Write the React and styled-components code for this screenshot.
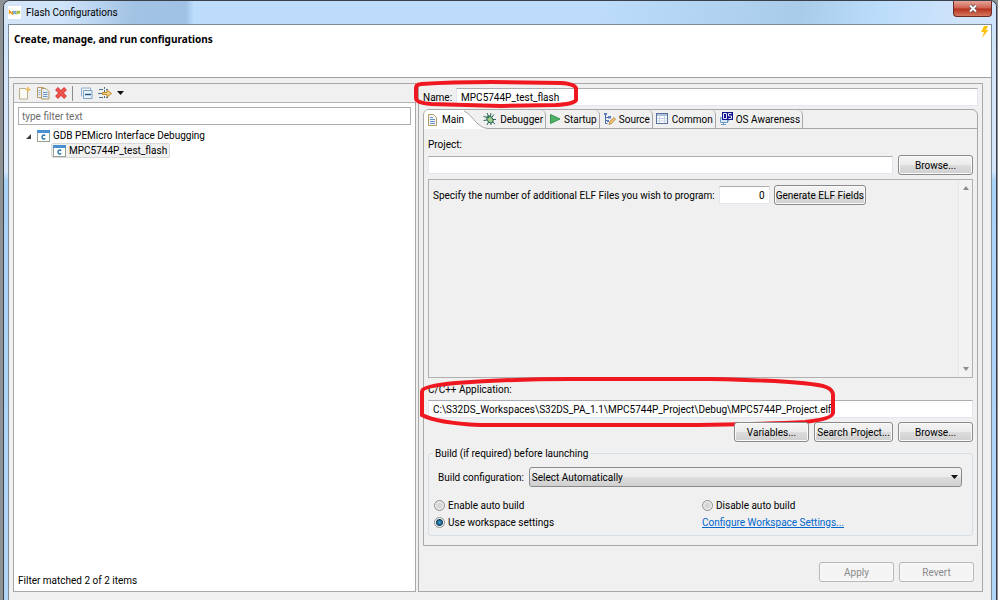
import React from 'react';
import styled, { createGlobalStyle } from 'styled-components';

const GlobalStyle = createGlobalStyle`
  *, *::before, *::after { box-sizing: border-box; }
  body {
    margin: 0;
    background: #8f9295;
    font-family: Roboto, 'Open Sans', sans-serif;
    font-size: 10px;
    line-height: 15px;
    color: #000;
  }
  button, input, select { font: inherit; color: inherit; margin: 0; }
`;

const Window = styled.main`
  display: flex;
  flex-direction: column;
  min-height: 100vh;
  margin: 0 1px 0 3px;
  padding: 0 4px;
  border: 1px solid #3a4148;
  border-bottom: 0;
  border-radius: 7px 7px 0 0;
  background: linear-gradient(#cfe3fa 0, #d4e6fa 170px, #a9d2f7 180px, #b2d6f8 100%);
`;

const TitleBar = styled.header`
  display: flex;
  align-items: center;
  gap: 5px;
  height: 23px;
  margin: 0 -4px;
  padding: 0 4px;
  border-radius: 6px 6px 0 0;
  background:
    linear-gradient(90deg, rgba(120, 160, 200, 0) 60px, rgba(120, 160, 200, 0.45) 130px, rgba(120, 160, 200, 0.45) 182px, rgba(120, 160, 200, 0) 190px),
    linear-gradient(100deg, #d6e6f8 0, #bddcfc 20%, #bddcfc 60%, #a9cbea 80%, #bbdcfb 88%, #cfe3fa 96%);
`;

const Title = styled.h1`
  flex: 1;
  margin: 0;
  font-size: 10px;
  font-weight: 400;
`;

const CloseButton = styled.button`
  display: flex;
  align-items: center;
  justify-content: center;
  align-self: flex-start;
  width: 39px;
  height: 16px;
  padding: 0;
  border: 1px solid #6b2a22;
  border-top: 0;
  border-radius: 0 0 4px 4px;
  background: linear-gradient(#e5a499, #d0604f 48%, #b5301c 52%, #d5775f);
`;

const Client = styled.div`
  flex: 1;
  display: flex;
  flex-direction: column;
  border: 1px solid #7d8b99;
  border-bottom: 0;
  background: #f0f0f0;
`;

const Banner = styled.div`
  display: flex;
  justify-content: space-between;
  height: 53px;
  padding: 0 2px 0 5px;
  border-bottom: 1px solid #a0a0a0;
  background: #fff;
`;

const BannerTitle = styled.h2`
  margin: 7px 0 0;
  font-family: 'Noto Sans', sans-serif;
  font-size: 10px;
  font-weight: 700;
`;

const Columns = styled.div`
  flex: 1;
  display: grid;
  grid-template-columns: minmax(0, 403fr) minmax(0, 565fr);
  gap: 2px;
  padding: 5px 8px 8px 4px;
`;

const Panel = styled.section`
  display: flex;
  flex-direction: column;
  border: 1px solid #a8a8a8;
  background: ${(p) => (p.$white ? '#fff' : '#f0f0f0')};
`;

const Toolbar = styled.div`
  display: flex;
  align-items: center;
  gap: 4px;
  height: 19px;
  padding: 0 4px;
  border-bottom: 1px solid #b4b4b4;
  background: #f0f0f0;
`;

const ToolButton = styled.button`
  display: flex;
  padding: 0;
  border: 0;
  background: none;
`;

const Separator = styled.span`
  width: 1px;
  height: 15px;
  margin-right: 3px;
  background: #8c8c8c;
`;

const TextInput = styled.input`
  flex: 1;
  width: ${(p) => p.$width || 'auto'};
  min-width: 0;
  height: 18px;
  padding: 0 4px;
  border: 1px solid #e2e6ee;
  border-top-color: #abadb3;
  background: #fff;
  text-align: ${(p) => p.$align || 'left'};
`;

const FilterInput = styled(TextInput)`
  flex: none;
  margin: 4px 4px 3px;
  padding: 0 3px;
  border-color: #abadb3;
  &::placeholder { color: #6d6d6d; opacity: 1; }
`;

const Tree = styled.ul`
  flex: 1;
  margin: 0;
  padding: 0 4px;
  list-style: none;
`;

const Branch = styled.ul`
  margin: 0;
  padding: 0 0 0 33px;
  list-style: none;
`;

const TreeRow = styled.div`
  display: flex;
  align-items: center;
  gap: 3px;
  width: fit-content;
  height: 15px;
  padding: 0 2px 0 1px;
  border: 1px solid ${(p) => (p.$selected ? '#d9d9d9' : 'transparent')};
  border-radius: 2px;
  background: ${(p) => (p.$selected ? '#f0f0f0' : 'none')};
`;

const Status = styled.p`
  margin: 0;
  padding: 0 4px 3px;
`;

const Row = styled.div`
  position: relative;
  display: flex;
  align-items: center;
  gap: 5px;
`;

const NameRow = styled(Row)`
  gap: 4px;
  padding: 4px 4px 3px;
`;

const TabFolder = styled.div`
  flex: 1;
  display: flex;
  flex-direction: column;
  margin: 0 4px;
  border: 1px solid #a8a8a8;
  border-radius: 6px 6px 0 0;
`;

const TabList = styled.div`
  display: flex;
  height: 19px;
  border-bottom: 1px solid #a8a8a8;
`;

const Tab = styled.button`
  display: flex;
  align-items: center;
  gap: 3px;
  height: 18px;
  padding: 0 2px 0 3px;
  border: 0;
  border-right: 1px solid #a8a8a8;
  border-radius: 0 5px 0 0;
  background: none;
  white-space: nowrap;
`;

const ActiveTab = styled(Tab)`
  position: relative;
  z-index: 1;
  height: 19px;
  padding: 0 0 0 3px;
  border: 0;
  border-radius: 5px 0 0 0;
  background: #fff;
`;

/* the slanted edge runs under the first inactive tab */
const TabCurve = styled.svg`
  flex: none;
  margin: 0 -8px 0 -4px;
`;

const TabPage = styled.div`
  flex: 1;
  display: flex;
  flex-direction: column;
  padding: 8px 4px 9px;
`;

const FieldLabel = styled.label`
  height: 18px;
`;

const PushButton = styled.button`
  width: ${(p) => p.$width || 'auto'};
  height: 20px;
  padding: 0 1px;
  border: 1px solid #8a8a8a;
  border-radius: 3px;
  background: linear-gradient(#f4f4f4, #ebebeb 48%, #dcdcdc 52%, #cfcfcf);
  box-shadow: inset 0 0 0 1px #fafafa;
  white-space: nowrap;
  &:disabled {
    border-color: #b4b8bb;
    background: #f4f4f4;
    color: #8a8a8a;
  }
`;

const ScrollBox = styled.div`
  flex: 1;
  display: flex;
  justify-content: space-between;
  min-height: 60px;
  margin: 4px 0;
  border: 1px solid #b0b0b0;
`;

const ElfRow = styled(Row)`
  gap: 4px;
  align-self: flex-start;
  padding: 5px 4px;
`;

const ScrollTrack = styled.div`
  display: flex;
  flex-direction: column;
  justify-content: space-between;
  align-items: center;
  width: 14px;
  padding: 6px 0;
  border-left: 1px solid #e6e6e6;
  background: #f2f2f2;
`;

const ButtonRow = styled(Row)`
  justify-content: flex-end;
  margin-top: 4px;
`;

const BuildGroup = styled.fieldset`
  min-width: 0;
  margin: 4px 0 0;
  padding: 6px 10px 5px 5px;
  border: 1px solid #d5dfe5;
  border-radius: 3px;
  legend { margin-left: -1px; padding: 0 2px; }
`;

const BuildRow = styled(Row)`
  padding-left: 4px;
`;

const SelectBox = styled.select`
  flex: 1;
  min-width: 0;
  height: 20px;
  padding: 0 2px;
  border: 1px solid #8a8a8a;
  border-radius: 3px;
  appearance: none;
  background: linear-gradient(#f2f2f2, #ebebeb 48%, #dddddd 52%, #cfcfcf);
`;

const SelectArrow = styled.svg`
  position: absolute;
  right: 4px;
  top: 8px;
  pointer-events: none;
`;

const Options = styled.div`
  display: grid;
  grid-template-columns: 1fr 1fr;
  gap: 2px 8px;
  margin-top: 11px;
`;

const Option = styled.label`
  display: flex;
  align-items: center;
  gap: 3px;
`;

const Radio = styled.input`
  width: 11px;
  height: 11px;
  border: 1px solid #8e8f8f;
  border-radius: 50%;
  appearance: none;
  background: radial-gradient(circle, #d6d6d6 2px, #f4f4f4 5px);
  &:checked {
    background: radial-gradient(circle at 50% 50%, #3fb2e6 0, #14405f 3px, #f4f4f4 4px);
  }
`;

const Link = styled.a`
  color: #0066cc;
  text-decoration: underline;
`;

const Footer = styled.div`
  display: flex;
  justify-content: flex-end;
  gap: 5px;
  padding: 16px 8px 9px;
`;

const Marker = styled.svg`
  position: absolute;
  left: -8px;
  top: ${(p) => p.$top};
  pointer-events: none;
  overflow: visible;
`;

const NxpIcon = () => (
  <svg width="13" height="13" viewBox="0 0 13 13">
    <rect width="13" height="13" fill="#fff" />
    <path d="M1.500 8V5l3 3V5" fill="none" stroke="#f0a020" strokeWidth="1.400" />
    <path d="M5 5l3 3M8 5L5 8" stroke="#6ba0c8" strokeWidth="1.400" />
    <path d="M9 8.500V5.500h2.500v1.500H9" fill="none" stroke="#a8c040" strokeWidth="1.300" />
  </svg>
);

const BoltIcon = () => (
  <svg width="9" height="14" viewBox="0 0 9 14">
    <path d="M4 1h4L6 5h2.500L2 13l2-6H1z" fill="#ffc20e" />
  </svg>
);

const NewIcon = () => (
  <svg width="14" height="14" viewBox="0 0 14 14">
    <path d="M1.500 2.500h6l2 2v8.500h-8z" fill="#fafbf6" stroke="#b9ae88" />
    <path d="M10 1v5M7.500 3.500h5" stroke="#e8bd55" strokeWidth="1.500" />
  </svg>
);

const CopyIcon = () => (
  <svg width="14" height="14" viewBox="0 0 14 14">
    <path d="M1.500 1.500h6v10h-6z" fill="#eef3fa" stroke="#b39b62" />
    <path d="M2.500 4.500h2M2.500 6.500h2M2.500 8.500h2" stroke="#8fa9cf" />
    <path d="M5.500 2.500h4.500l3 3v7.500h-7.500z" fill="#e4edf8" stroke="#b39b62" />
    <path d="M7 6.500h4.500M7 8.500h4.500M7 10.500h4.500" stroke="#6f93c5" />
  </svg>
);

const DeleteIcon = () => (
  <svg width="14" height="14" viewBox="0 0 14 14">
    <path d="M2.500 2.500l9 9M11.500 2.500l-9 9" stroke="#d23a3a" strokeWidth="4" />
    <path d="M3 3l8 8M11 3l-8 8" stroke="#f0544e" strokeWidth="2.500" />
  </svg>
);

const CollapseIcon = () => (
  <svg width="14" height="14" viewBox="0 0 14 14">
    <path d="M1.500 10.500v-8.500h9v2" fill="none" stroke="#8fb0cf" />
    <path d="M3.500 4.500h8.500v8h-8.500z" fill="#e8f4fc" stroke="#7ba0c3" />
    <path d="M5 8.500h6" stroke="#1f4f86" strokeWidth="1.400" />
  </svg>
);

const FilterIcon = () => (
  <svg width="15" height="14" viewBox="0 0 15 14">
    <path d="M1 3.500h4M0 7.500h4M1 11.500h4M8 3.500h2M8 11.500h2" stroke="#4c708f" />
    <path d="M6.500 1v12" stroke="#4c708f" strokeDasharray="2 1" />
    <path d="M4.500 6.500h4.500v-2.500l4.500 3.500-4.500 3.500v-2.500h-4.500z" fill="#f5d58a" stroke="#c08a2d" />
  </svg>
);

const DownArrow = () => (
  <svg width="7" height="4" viewBox="0 0 7 4">
    <path d="M0 0h7L3.500 4z" fill="#111" />
  </svg>
);

const CIcon = () => (
  <svg width="13" height="12" viewBox="0 0 13 12">
    <rect x="0.500" y="0.500" width="12" height="11" fill="#fff" stroke="#97a192" />
    <rect x="0" y="0" width="13" height="3" fill="#4a90d0" />
    <path d="M8.300 5.500C7 4.600 5 5 5 7s2 2.500 3.300 1.500" fill="none" stroke="#1d6fa5" strokeWidth="1.400" />
  </svg>
);

const PageIcon = () => (
  <svg width="12" height="14" viewBox="0 0 12 14">
    <path d="M1.500 1.500h5l3 3v8h-8z" fill="#f3f7fc" stroke="#b39b62" />
    <path d="M3 4.500h3M3 6.500h5M3 8.500h5M3 10.500h5" stroke="#6f93c5" />
  </svg>
);

const BugIcon = () => (
  <svg width="14" height="14" viewBox="0 0 14 14">
    <path d="M4 1l1.500 3M8 1l-.5 3M0.500 4.500l4 1M0.500 8.500l3.500-.5M4 13l1.500-3M11 2.500L9 5M13 7.500l-3.500 0M12 12l-3-2.500M8 13l0-2" stroke="#2d6357" />
    <ellipse cx="7" cy="7.500" rx="2.600" ry="3.600" transform="rotate(-35 7 7.500)" fill="#a2cf89" stroke="#2d6357" />
    <circle cx="5.200" cy="4.800" r="1.500" fill="#3d7866" />
  </svg>
);

const PlayIcon = () => (
  <svg width="12" height="12" viewBox="0 0 12 12">
    <path d="M1.500 1.500l9.500 4.500-9.500 4.500z" fill="#4db266" stroke="#37954f" />
  </svg>
);

const SourceIcon = () => (
  <svg width="13" height="14" viewBox="0 0 13 14">
    <path d="M2.500 2v9.500h2M2.500 5.500h3M2.500 8.500h2" fill="none" stroke="#4b6fae" />
    <path d="M1 1h3v2H1zM5 4h3v2.500H5zM4 8h2v2H4z" fill="#5d80bd" />
    <path d="M6 12.500l.8-3 4.200-4 1.500 1.500-4 4.500z" fill="#f4c878" stroke="#b57b35" strokeWidth="0.800" />
  </svg>
);

const CommonIcon = () => (
  <svg width="13" height="12" viewBox="0 0 13 12">
    <rect x="0.500" y="0.500" width="11" height="10" fill="#fff" stroke="#58729d" />
    <path d="M1 2h10" stroke="#a9bfdd" strokeWidth="2" />
    <path d="M3.500 1v9M8.500 3v7M1 5.500h10M1 8h10" stroke="#c5d3e5" />
  </svg>
);

const OsIcon = () => (
  <svg width="14" height="16" viewBox="0 0 14 16">
    <path d="M1.500 6.500h7v5h-7zM2 13.500h5M4.500 11.500v2M10 9l-2 3" fill="#d5e8f6" stroke="#6e9bc4" />
    <rect x="3" y="1" width="11" height="8" fill="#11118a" />
    <path d="M4.500 2.500h3v5h-3zM12.500 2.500h-3v2.500h3v2.500h-3" fill="none" stroke="#e6e9ff" />
  </svg>
);

const ScrollArrow = ({ down }) => (
  <svg width="6" height="4" viewBox="0 0 6 4">
    <path d={down ? 'M0 0h6L3 4z' : 'M0 4h6L3 0z'} fill="#8a8a8a" />
  </svg>
);

const tabs = [
  { name: 'Debugger', Icon: BugIcon },
  { name: 'Startup', Icon: PlayIcon },
  { name: 'Source', Icon: SourceIcon },
  { name: 'Common', Icon: CommonIcon },
  { name: 'OS Awareness', Icon: OsIcon },
];

const ConfigList = () => (
  <Panel $white>
    <Toolbar>
      <ToolButton aria-label="New"><NewIcon /></ToolButton>
      <ToolButton aria-label="Duplicate"><CopyIcon /></ToolButton>
      <ToolButton aria-label="Delete"><DeleteIcon /></ToolButton>
      <Separator />
      <ToolButton aria-label="Collapse all"><CollapseIcon /></ToolButton>
      <ToolButton aria-label="Filter"><FilterIcon /></ToolButton>
      <ToolButton aria-label="Filter menu"><DownArrow /></ToolButton>
    </Toolbar>
    <FilterInput aria-label="Filter" placeholder="type filter text" />
    <Tree>
      <li>
        <TreeRow>
          <svg width="14" height="6" viewBox="0 0 14 6"><path d="M6 6h5V1z" fill="#404040" /></svg>
          <CIcon />
          GDB PEMicro Interface Debugging
        </TreeRow>
        <Branch>
          <li><TreeRow $selected><CIcon />MPC5744P_test_flash</TreeRow></li>
        </Branch>
      </li>
    </Tree>
    <Status>Filter matched 2 of 2 items</Status>
  </Panel>
);

const MainPage = () => (
  <TabPage>
    <FieldLabel htmlFor="project">Project:</FieldLabel>
    <Row>
      <TextInput id="project" />
      <PushButton $width="75px">Browse...</PushButton>
    </Row>
    <ScrollBox>
      <ElfRow>
        <label htmlFor="elf-count">Specify the number of additional ELF Files you wish to program:</label>
        <TextInput id="elf-count" $width="51px" $align="right" defaultValue="0" />
        <PushButton $width="92px">Generate ELF Fields</PushButton>
      </ElfRow>
      <ScrollTrack>
        <ScrollArrow />
        <ScrollArrow down />
      </ScrollTrack>
    </ScrollBox>
    <FieldLabel htmlFor="application">C/C++ Application:</FieldLabel>
    <Row>
      <TextInput id="application" defaultValue="C:\S32DS_Workspaces\S32DS_PA_1.1\MPC5744P_Project\Debug\MPC5744P_Project.elf" />
      <Marker width="416" height="50" viewBox="0 0 416 50" $top="-23px">
        <path d="M2 14Q3 9 36 6Q90 2 150 2H290Q390 4 406 10Q414 13 413 20V36Q412 42 385 45Q330 48 230 48H60Q17 46 2 38V14" fill="none" stroke="#f01820" strokeWidth="4" />
      </Marker>
    </Row>
    <ButtonRow>
      <PushButton $width="75px">Variables...</PushButton>
      <PushButton $width="79px">Search Project...</PushButton>
      <PushButton $width="75px">Browse...</PushButton>
    </ButtonRow>
    <BuildGroup>
      <legend>Build (if required) before launching</legend>
      <BuildRow>
        <label htmlFor="build-config">Build configuration:</label>
        <SelectBox id="build-config">
          <option>Select Automatically</option>
        </SelectBox>
        <SelectArrow width="7" height="4" viewBox="0 0 7 4"><path d="M0 0h7L3.500 4z" fill="#111" /></SelectArrow>
      </BuildRow>
      <Options>
        <Option><Radio type="radio" name="build" />Enable auto build</Option>
        <Option><Radio type="radio" name="build" />Disable auto build</Option>
        <Option><Radio type="radio" name="build" defaultChecked />Use workspace settings</Option>
        <span><Link href="#workspace">Configure Workspace Settings...</Link></span>
      </Options>
    </BuildGroup>
  </TabPage>
);

const ConfigEditor = () => (
  <Panel>
    <NameRow>
      <label htmlFor="config-name">Name:</label>
      <TextInput id="config-name" defaultValue="MPC5744P_test_flash" />
      <Marker width="168" height="28" viewBox="0 0 168 28" $top="-4px">
        <path d="M10 4Q40 2 80 2L150 3Q165 4 165 9V20Q163 24 145 25L90 26L20 24Q5 23 5 18V8Q5 4 11 4" fill="none" stroke="#f01820" strokeWidth="4" />
      </Marker>
    </NameRow>
    <TabFolder>
      <TabList role="tablist">
        <ActiveTab role="tab" aria-selected="true"><PageIcon />Main</ActiveTab>
        <TabCurve width="28" height="19" viewBox="0 0 28 19">
          <path d="M0 0C12 1 15 18 28 18.500V19H0z" fill="#fff" />
          <path d="M0 0C12 1 15 18 28 18.500" fill="none" stroke="#a8a8a8" />
        </TabCurve>
        {tabs.map(({ name, Icon }) => (
          <Tab key={name} role="tab" aria-selected="false"><Icon />{name}</Tab>
        ))}
      </TabList>
      <MainPage />
    </TabFolder>
    <Footer>
      <PushButton $width="75px" disabled>Apply</PushButton>
      <PushButton $width="75px" disabled>Revert</PushButton>
    </Footer>
  </Panel>
);

const App = () => (
  <>
    <GlobalStyle />
    <Window>
      <TitleBar>
        <NxpIcon />
        <Title>Flash Configurations</Title>
        <CloseButton aria-label="Close">
          <svg width="10" height="9" viewBox="0 0 10 9">
            <path d="M2 1.500l6 6M8 1.500l-6 6" stroke="#5c4a4a" strokeWidth="3.500" />
            <path d="M2 1.500l6 6M8 1.500l-6 6" stroke="#fff" strokeWidth="2" />
          </svg>
        </CloseButton>
      </TitleBar>
      <Client>
        <Banner>
          <BannerTitle>Create, manage, and run configurations</BannerTitle>
          <BoltIcon />
        </Banner>
        <Columns>
          <ConfigList />
          <ConfigEditor />
        </Columns>
      </Client>
    </Window>
  </>
);

export default App;
